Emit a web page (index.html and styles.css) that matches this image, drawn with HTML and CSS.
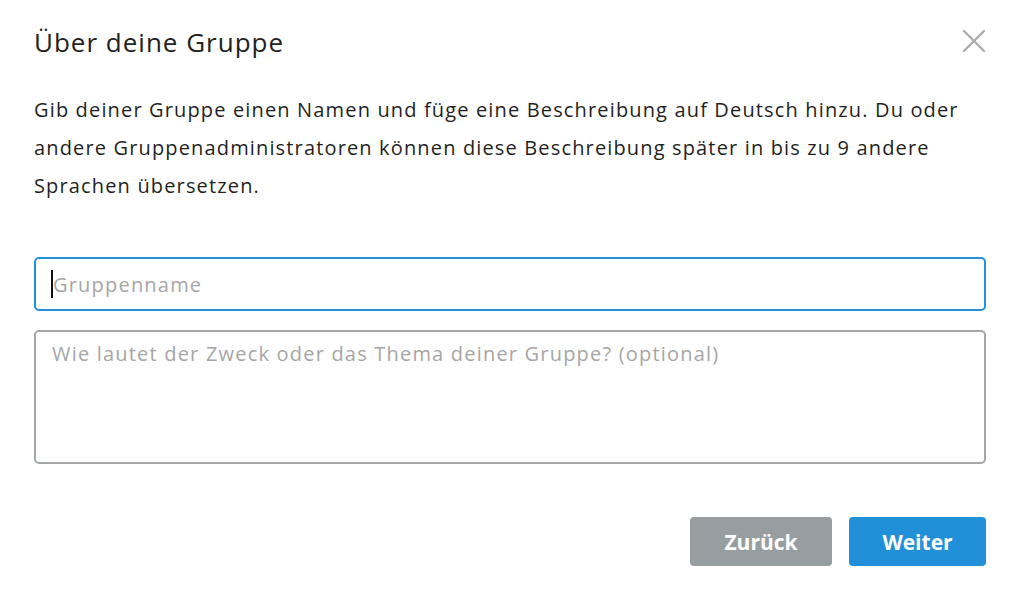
FILE: index.html
```html
<!DOCTYPE html>
<html lang="de">
<head>
<meta charset="utf-8">
<link rel="stylesheet" href="styles.css">
</head>
<body>
<div class="dialog">
  <div class="header">
    <h1 class="title">Über deine Gruppe</h1>
    <button class="close" aria-label="Schließen">
      <svg width="24" height="24" viewBox="0 0 24 24"><path d="M2 2L22 22M22 2L2 22" stroke="#a9a9a9" stroke-width="2.2" stroke-linecap="round"/></svg>
    </button>
  </div>
  <p class="intro">Gib deiner Gruppe einen Namen und füge eine Beschreibung auf Deutsch hinzu. Du oder andere Gruppenadministratoren können diese Beschreibung später in bis zu 9 andere Sprachen übersetzen.</p>
  <div class="fields">
    <div class="input focused"><span class="caret"></span><span class="ph">Gruppenname</span></div>
    <div class="textarea"><span class="ph">Wie lautet der Zweck oder das Thema deiner Gruppe? (optional)</span></div>
  </div>
  <div class="actions">
    <button class="btn back">Zurück</button>
    <button class="btn next">Weiter</button>
  </div>
</div>
</body>
</html>
```
FILE: styles.css
```css
* { box-sizing: border-box; }
html, body { margin: 0; background: #fff; }
body { font-family: "Open Sans", Lato, sans-serif; color: #1d1d1d; }
.dialog { width: 1018px; height: 599px; padding: 24px 32px 0 34px; }
.header { display: flex; justify-content: space-between; align-items: flex-start; }
.title { margin: 0; font-size: 26px; letter-spacing: 1px; font-weight: 400; line-height: 36px; color: #222; }
.close { border: 0; background: none; padding: 0; margin: 5px 0 0 0; width: 24px; height: 24px; cursor: pointer; }
.close svg { display: block; }
.intro { margin: 31px 0 0 0; font-size: 20px; letter-spacing: 1.15px; line-height: 38px; color: #1f1f1f; }
.fields { margin-top: 52px; display: flex; flex-direction: column; gap: 19px; }
.input, .textarea { border-radius: 5px; font-size: 20px; letter-spacing: 1.2px; color: #a6a6a6; display: flex; align-items: flex-start; }
.input { height: 54px; border: 2px solid #2290db; padding: 0 0 0 15px; align-items: center; }
.textarea { height: 134px; border: 2px solid #a3a7aa; padding: 8px 16px; }
.caret { width: 2px; height: 28px; background: #111; }
.actions { display: flex; justify-content: flex-end; gap: 17px; margin-top: 53px; }
.btn { border: 0; border-radius: 4px; height: 49px; color: #fff; font-family: inherit; font-weight: 700; font-size: 21px; cursor: pointer; }
.back { width: 142px; background: #979ea1; }
.next { width: 137px; background: #2190d9; }
```
